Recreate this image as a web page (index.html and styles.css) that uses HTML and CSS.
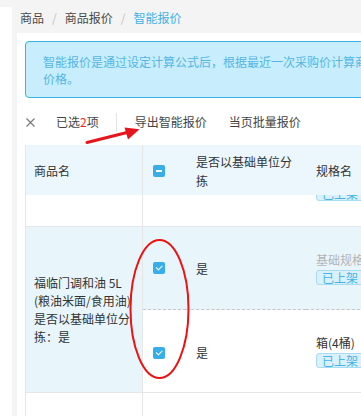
FILE: index.html
```html
<!DOCTYPE html>
<html>
<head>
    <title>智能报价</title>
    <meta name="viewport" content="width=device-width, initial-scale=1.0">
    <link rel="stylesheet" href="styles.css">
</head>
<body>
<div class="layout">
    <aside class="sidebar"></aside>
    <main class="main">
        <nav class="breadcrumb">
            <span class="crumb">商品</span>
            <span class="crumb-sep">/</span>
            <span class="crumb">商品报价</span>
            <span class="crumb-sep">/</span>
            <span class="crumb crumb-active">智能报价</span>
        </nav>

        <section class="card">
            <div class="alert">智能报价是通过设定计算公式后，根据最近一次采购价计算商品<br>价格。</div>

            <div class="toolbar">
                <svg class="close-icon" width="9" height="9" viewBox="0 0 9 9">
                    <path d="M0.5 0.5 L8.5 8.5 M8.5 0.5 L0.5 8.5" stroke="#777" stroke-width="1.1"/>
                </svg>
                <span class="selected">已选<em>2</em>项</span>
                <span class="toolbar-sep"></span>
                <span class="toolbar-btn">导出智能报价</span>
                <span class="toolbar-btn toolbar-btn-last">当页批量报价</span>
            </div>

            <div class="grid">
                <!-- header -->
                <div class="cell head col-name">商品名</div>
                <div class="cell head col-check"><span class="checkbox indeterminate"></span></div>
                <div class="cell head col-sort">是否以基础单位分<br>拣</div>
                <div class="cell head col-spec">规格名</div>

                <!-- row scrolled under header -->
                <div class="cell row-a col-name"></div>
                <div class="cell row-a"></div>
                <div class="cell row-a"></div>
                <div class="cell row-a col-spec clip"><span class="tag tag-hidden">已上架</span></div>

                <!-- product with two specs -->
                <div class="cell product col-name">
                    福临门调和油 5L<br>(粮油米面/食用油)<br>是否以基础单位分<br>拣：是
                </div>
                <div class="cell spec-hover dashed col-check"><span class="checkbox checked"></span></div>
                <div class="cell spec-hover dashed col-sort">是</div>
                <div class="cell spec-hover dashed col-spec">
                    <div class="spec-block">
                        <span class="spec-name muted">基础规格</span>
                        <span class="tag">已上架</span>
                    </div>
                </div>

                <div class="cell spec-row col-check"><span class="checkbox checked"></span></div>
                <div class="cell spec-row col-sort">是</div>
                <div class="cell spec-row col-spec">
                    <div class="spec-block">
                        <span class="spec-name">箱(4桶)</span>
                        <span class="tag">已上架</span>
                    </div>
                </div>

                <!-- next row -->
                <div class="cell last col-name"></div>
                <div class="cell last"></div>
                <div class="cell last"></div>
                <div class="cell last"></div>
            </div>
        </section>
    </main>
</div>

<svg class="markup" width="361" height="416" viewBox="0 0 361 416">
    <line x1="87" y1="142.5" x2="129" y2="132" stroke="#e8141b" stroke-width="3" stroke-linecap="round"/>
    <polygon points="139.5,129.3 124.5,127.5 128,139.5" fill="#e8141b"/>
    <ellipse cx="159.5" cy="309" rx="29" ry="69" fill="none" stroke="#ee1111" stroke-width="2"/>
</svg>
</body>
</html>
```

FILE: styles.css
```css
body {
    margin: 0;
    background-color: #f4f4f4;
    font-family: "Noto Sans CJK SC", "Noto Sans", sans-serif;
    font-size: 12px;
    color: #333;
    overflow: hidden;
}

.layout {
    display: flex;
    height: 416px;
}

.sidebar {
    width: 12px;
    margin-top: 7px;
    background-color: #fff;
    flex-shrink: 0;
}

.main {
    flex: 1;
    margin-left: 5px;
    display: flex;
    flex-direction: column;
    min-width: 0;
}

/* breadcrumb */

.breadcrumb {
    height: 33px;
    display: flex;
    align-items: center;
    padding-left: 3px;
    padding-top: 2px;
    box-sizing: border-box;
    line-height: 16px;
    color: #4a4a4a;
}

.crumb-sep {
    margin: 0 8px;
    color: #c4c4c4;
}

.crumb-active {
    color: #3db1e8;
}

/* card */

.card {
    flex: 1;
    background-color: #fff;
    padding: 8px 0 0 8px;
    overflow: hidden;
}

.alert {
    width: 360px;
    border: 1px solid #35b2ea;
    border-radius: 4px;
    background-color: #c8eefd;
    color: #55b5e4;
    line-height: 17px;
    padding: 11px 0 10px 17px;
    white-space: nowrap;
}

.toolbar {
    height: 36px;
    margin-top: 6px;
    margin-bottom: 5px;
    display: flex;
    align-items: center;
    line-height: 16px;
    color: #444;
    white-space: nowrap;
}

.close-icon {
    margin-left: 1px;
    margin-right: 21px;
}

.selected em {
    font-style: normal;
    color: #f5222d;
}

.toolbar-sep {
    width: 1px;
    height: 18px;
    background-color: #e3e3e3;
    margin: 0 18px 0 17px;
}

.toolbar-btn-last {
    margin-left: 22px;
}

/* table */

.grid {
    display: grid;
    grid-template-columns: 117px 43px 120px 1fr;
    grid-template-rows: 50px 32px 83px 83px 40px;
    border-left: 1px solid #e6e6e6;
    width: 400px;
}

.cell {
    box-sizing: border-box;
    display: flex;
    align-items: center;
    padding-left: 10px;
    white-space: nowrap;
}

.col-name {
    border-right: 1px solid #e6e6e6;
    padding-left: 8px;
}

.head {
    background-color: #ebf7fd;
    line-height: 19px;
    padding-top: 1px;
}

.row-a,
.last {
    border-bottom: 1px solid #e6e6e6;
}

.clip {
    overflow: hidden;
    align-items: flex-start;
}

.tag-hidden {
    margin-top: -9px;
}

.product {
    grid-row: span 2;
    background-color: #e8f6fc;
    border-bottom: 1px solid #e6e6e6;
    line-height: 18px;
}

.spec-hover {
    background-color: #e8f6fc;
}

.dashed {
    border-bottom: 1px dashed #c6c6c6;
}

.spec-row {
    border-bottom: 1px solid #e6e6e6;
}

.spec-row.col-check,
.spec-row.col-sort {
    padding-top: 3px;
}

.col-check {
    padding-left: 10px;
}

.checkbox {
    width: 12px;
    height: 12px;
    border-radius: 2px;
    background-color: #38aee8;
    display: flex;
    align-items: center;
    justify-content: center;
}

.indeterminate::after {
    content: "";
    width: 6px;
    height: 2px;
    background-color: #fff;
}

.checked::after {
    content: "";
    width: 5px;
    height: 2.5px;
    border-left: 1.2px solid #fff;
    border-bottom: 1.2px solid #fff;
    transform: rotate(-45deg);
    margin-top: -2px;
}

.spec-block {
    display: flex;
    flex-direction: column;
    align-items: flex-start;
    gap: 2px;
}

.spec-name {
    line-height: 16px;
}

.muted {
    color: #b4b4b4;
}

.tag {
    display: inline-block;
    line-height: 13px;
    padding: 0 5px;
    border: 1px solid #a8dcf3;
    border-radius: 3px;
    background-color: #daf1fb;
    color: #46b2e6;
}

/* hand-drawn annotation on top of the screenshot */

.markup {
    position: absolute;
    top: 0;
    left: 0;
    pointer-events: none;
}
```
